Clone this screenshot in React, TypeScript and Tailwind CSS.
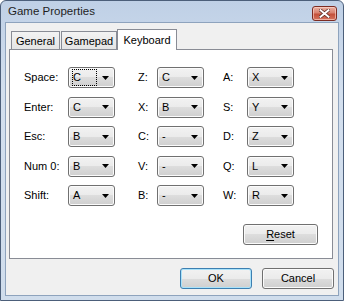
import React from 'react'

const rows: [string, string, string, string, string, string][] = [
  ['Space:', 'C', 'Z:', 'C', 'A:', 'X'],
  ['Enter:', 'C', 'X:', 'B', 'S:', 'Y'],
  ['Esc:', 'B', 'C:', '-', 'D:', 'Z'],
  ['Num 0:', 'B', 'V:', '-', 'Q:', 'L'],
  ['Shift:', 'A', 'B:', '-', 'W:', 'R'],
]

const btnFace =
  'bg-[linear-gradient(#f2f2f2_0%,#ebebeb_50%,#dddddd_50%,#cfcfcf_100%)] shadow-[inset_0_0_0_1px_#fbfbfb]'

function Combo({ value, focused }: { value: string; focused?: boolean }) {
  return (
    <div
      className={`relative flex h-[21px] w-[47px] items-center rounded-[3px] border border-[#707070] pl-[3px] pr-[5px] ${btnFace}`}
    >
      <span
        className={`flex h-[17px] items-center pl-[1px] ${
          focused ? 'w-[25px] outline outline-1 outline-dotted outline-black -outline-offset-1' : ''
        }`}
      >
        {value}
      </span>
      <svg className="ml-auto" width="7" height="4" viewBox="0 0 7 4">
        <path d="M0 0h7L3.5 4z" fill="#000" />
      </svg>
    </div>
  )
}

function Tab({ label, width, active }: { label: string; width: string; active?: boolean }) {
  if (active) {
    return (
      <div
        className={`relative z-10 -mb-px flex h-[21px] items-start justify-center border border-b-0 border-[#898c95] bg-white pt-[2px] ${width}`}
      >
        {label}
      </div>
    )
  }
  return (
    <div
      className={`flex h-[18px] items-center justify-center border border-b-0 border-[#898c95] bg-[linear-gradient(#f3f3f3,#e4e4e4)] pt-[1px] ${width}`}
    >
      {label}
    </div>
  )
}

export default function App() {
  return (
    <div className="h-[301px] w-[344px] overflow-hidden bg-white">
      <div className="flex h-full w-full flex-col rounded-t-[6px] border border-[#4c5f7a] bg-[linear-gradient(#bfd0e6,#d3dfee_30%,#d0ddec)] font-['Liberation_Sans',Arial,sans-serif] text-[11px] text-black">
        {/* title bar */}
        <div className="flex h-[21px] shrink-0 items-center pl-[7px] pr-[6px]">
          <span className="text-[11.5px] leading-none text-[#1e1e1e]">Game Properties</span>
          <div className="ml-auto mt-[3px] flex h-[15px] w-[25px] items-center justify-center rounded-[3px] border border-[#7d2c22] bg-[linear-gradient(#eab1a3_0%,#d98270_45%,#c4503a_55%,#d5735e_100%)] shadow-[inset_0_0_0_1px_rgba(255,220,210,0.6)]">
            <svg width="11" height="9" viewBox="0 0 11 9">
              <path d="M1.5 1.2L9.5 7.8M9.5 1.2L1.5 7.8" stroke="#5a2a22" strokeWidth="3.4" strokeLinecap="square" />
              <path d="M1.5 1.2L9.5 7.8M9.5 1.2L1.5 7.8" stroke="#ffffff" strokeWidth="2" strokeLinecap="square" />
            </svg>
          </div>
        </div>

        {/* client area */}
        <div className="mx-[4px] mb-[4px] flex flex-1 flex-col border border-[#8ea3bd] bg-[#f0f0f0]">
          <div className="ml-[5px] mt-[6px] flex items-end">
            <Tab label="General" width="w-[49px]" />
            <div className="w-px" />
            <Tab label="Gamepad" width="w-[56px]" />
            <Tab label="Keyboard" width="w-[60px]" active />
          </div>

          <div className="ml-[3px] flex h-[210px] w-[324px] flex-col border border-[#898c95] bg-white pl-[14px] pr-[14px] pt-[17px]">
            <div className="grid grid-cols-[44px_47px_23px_19px_47px_19px_24px_47px] gap-y-[8.5px]">
              {rows.map((r, i) => (
                <React.Fragment key={i}>
                  <div className="flex h-[21px] items-center">{r[0]}</div>
                  <Combo value={r[1]} focused={i === 0} />
                  <div />
                  <div className="flex h-[21px] items-center">{r[2]}</div>
                  <Combo value={r[3]} />
                  <div />
                  <div className="flex h-[21px] items-center">{r[4]}</div>
                  <Combo value={r[5]} />
                </React.Fragment>
              ))}
            </div>
            <div className="mt-[18px] flex justify-end">
              <button
                className={`flex h-[21px] w-[75px] items-center justify-center rounded-[3px] border border-[#707070] ${btnFace}`}
              >
                <span>
                  <span className="underline underline-offset-2">R</span>eset
                </span>
              </button>
            </div>
          </div>

          <div className="mt-[9px] flex justify-end gap-[10px] pr-[4px]">
            <button className="flex h-[21px] w-[72px] items-center justify-center rounded-[3px] border border-[#3c7fb1] bg-[linear-gradient(#f2f2f2_0%,#ebebeb_50%,#dddddd_50%,#cfcfcf_100%)] shadow-[inset_0_0_0_1px_#a9e2fa]">
              OK
            </button>
            <button
              className={`flex h-[21px] w-[72px] items-center justify-center rounded-[3px] border border-[#707070] ${btnFace}`}
            >
              Cancel
            </button>
          </div>
        </div>
      </div>
    </div>
  )
}
